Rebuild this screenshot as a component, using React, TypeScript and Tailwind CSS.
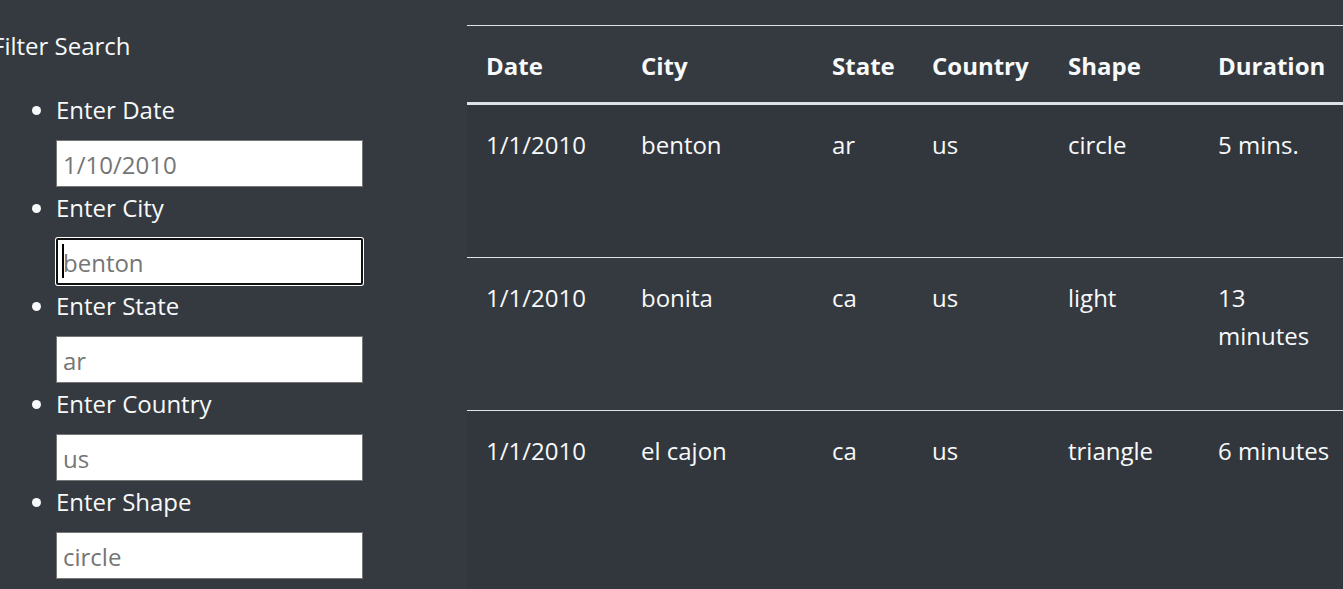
import React from "react";

type Field = { id: string; label: string; placeholder: string; active?: boolean };

const fields: Field[] = [
  { id: "datetime", label: "Enter Date", placeholder: "1/10/2010" },
  { id: "city", label: "Enter City", placeholder: "benton", active: true },
  { id: "state", label: "Enter State", placeholder: "ar" },
  { id: "country", label: "Enter Country", placeholder: "us" },
  { id: "shape", label: "Enter Shape", placeholder: "circle" },
];

const columns = [
  { name: "Date", width: "w-[155px]" },
  { name: "City", width: "w-[191px]" },
  { name: "State", width: "w-[100px]" },
  { name: "Country", width: "w-[136px]" },
  { name: "Shape", width: "w-[150px]" },
  { name: "Duration", width: "w-[154px]" },
];

const sightings = [
  { cells: ["1/1/2010", "benton", "ar", "us", "circle", "5 mins."], height: "h-[153px]" },
  { cells: ["1/1/2010", "bonita", "ca", "us", "light", "13 minutes"], height: "h-[153px]" },
  { cells: ["1/1/2010", "el cajon", "ca", "us", "triangle", "6 minutes"], height: "h-[191px]" },
];

function FilterField({ id, label, placeholder, active }: Field) {
  return (
    <li className="pb-[2px]">
      <label htmlFor={id} className="mb-[11px] block">
        {label}
      </label>
      <div className="relative">
        <input
          id={id}
          type="text"
          placeholder={placeholder}
          className={
            active
              ? "block h-[47px] w-full rounded-[2px] border-2 border-[#101010] bg-white px-[5px] pt-[2px] text-black caret-transparent ring-1 ring-white outline-none placeholder:text-[#757575]"
              : "block h-[47px] w-full border border-[#767676] bg-white px-[6px] pt-[2px] text-black placeholder:text-[#757575]"
          }
        />
        {active && <span className="absolute top-[6px] left-[6px] h-[34px] w-[2px] bg-black" />}
      </div>
    </li>
  );
}

export default function App() {
  return (
    <div className="flex h-screen overflow-hidden bg-[#353a40] pt-[25px] font-['Open_Sans','Noto_Sans',sans-serif] text-[24px] leading-[38px] text-[#f8f9fa]">
      <aside className="w-[467px] shrink-0 pt-[2px]">
        <p className="-ml-2 mb-[26px]">Filter Search</p>
        <ul className="ml-[56px] w-[307px] list-disc">
          {fields.map((field) => (
            <FilterField key={field.id} {...field} />
          ))}
        </ul>
      </aside>
      <main className="min-w-0 flex-1">
        <table className="w-full min-w-[886px] table-fixed border-separate border-spacing-0 text-left">
          <thead>
            <tr>
              {columns.map((column) => (
                <th
                  key={column.name}
                  scope="col"
                  className={`${column.width} border-t border-b-3 border-[#dee2e6] px-[19px] pt-[21px] pb-[17px] font-bold`}
                >
                  {column.name}
                </th>
              ))}
            </tr>
          </thead>
          <tbody>
            {sightings.map((row, index) => (
              <tr key={index} className={`${row.height} odd:bg-[#32373d]`}>
                {row.cells.map((cell, i) => (
                  <td key={i} className="border-b border-[#dee2e6] px-[19px] pt-[21px] pb-[17px] align-top">
                    {cell}
                  </td>
                ))}
              </tr>
            ))}
          </tbody>
        </table>
      </main>
    </div>
  );
}
